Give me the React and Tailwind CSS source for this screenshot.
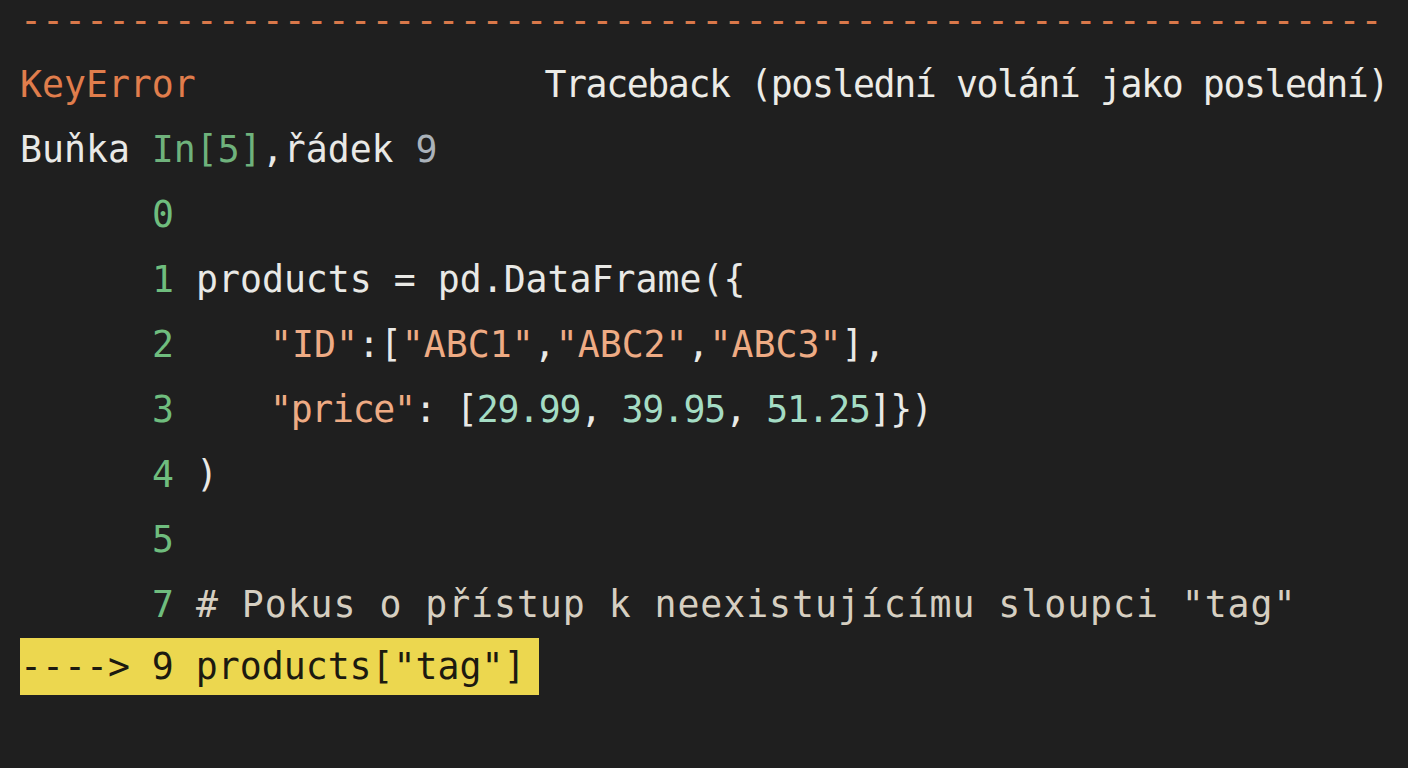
import React from "react";

const mono = { fontFamily: '"DejaVu Sans Mono", "Liberation Mono", monospace' };

const Num = ({ n }) => <span className="w-[44px] shrink-0 text-[#6fbd7e]">{n}</span>;

const Row = ({ children, className = "" }) => (
  <div className={`h-[65px] flex items-center whitespace-pre ${className}`}>{children}</div>
);

const App = () => {
  const dashes = "-".repeat(62);

  return (
    <div
      className="w-[1408px] h-[768px] bg-[#1f1f1f] text-[#e9e9e6] text-[36.5px] overflow-hidden pl-[20px]"
      style={mono}
    >
      <div className="h-[42px] leading-[42px] mb-[11px] text-[#d9784a] whitespace-pre">{dashes}</div>

      <Row className="justify-between pr-[20px]">
        <span className="text-[#e07d4c]">KeyError</span>
        <span className="tracking-[-1.4px] text-[#ecebe6]">Traceback (poslední volání jako poslední)</span>
      </Row>

      <Row>
        <span>Buňka </span>
        <span className="text-[#6fb27c]">In[5]</span>
        <span>,řádek </span>
        <span className="text-[#aab2ba]">9</span>
      </Row>

      <div className="pl-[132px]">
        <Row>
          <Num n="0" />
        </Row>
        <Row>
          <Num n="1" />
          <span>products = pd.DataFrame({"{"}</span>
        </Row>
        <Row>
          <Num n="2" />
          <span className="pl-[74px]">
            <span className="text-[#eeab84]">"ID"</span>
            <span>:[</span>
            <span className="text-[#eeab84]">"ABC1"</span>,
            <span className="text-[#eeab84]">"ABC2"</span>,
            <span className="text-[#eeab84]">"ABC3"</span>
            <span>],</span>
          </span>
        </Row>
        <Row>
          <Num n="3" />
          <span className="pl-[74px] tracking-[-1.3px]">
            <span className="text-[#eeab84]">"price"</span>
            <span>: [</span>
            <span className="text-[#a4dcc4]">29.99</span>
            <span>, </span>
            <span className="text-[#a4dcc4]">39.95</span>
            <span>, </span>
            <span className="text-[#a4dcc4]">51.25</span>
            <span>]{"}"})</span>
          </span>
        </Row>
        <Row>
          <Num n="4" />
          <span>)</span>
        </Row>
        <Row>
          <Num n="5" />
        </Row>
        <Row>
          <Num n="7" />
          <span className="text-[#d6cfc1] tracking-[0.95px]">
            # Pokus o přístup k neexistujícímu sloupci "tag"
          </span>
        </Row>
      </div>

      <div className="h-[65px] flex items-start">
        <span className="h-[57px] leading-[57px] bg-[#ecd74f] text-[#1c1a10] pr-[14px] whitespace-pre">
          {'----> 9 products["tag"]'}
        </span>
      </div>
    </div>
  );
};

export default App;
